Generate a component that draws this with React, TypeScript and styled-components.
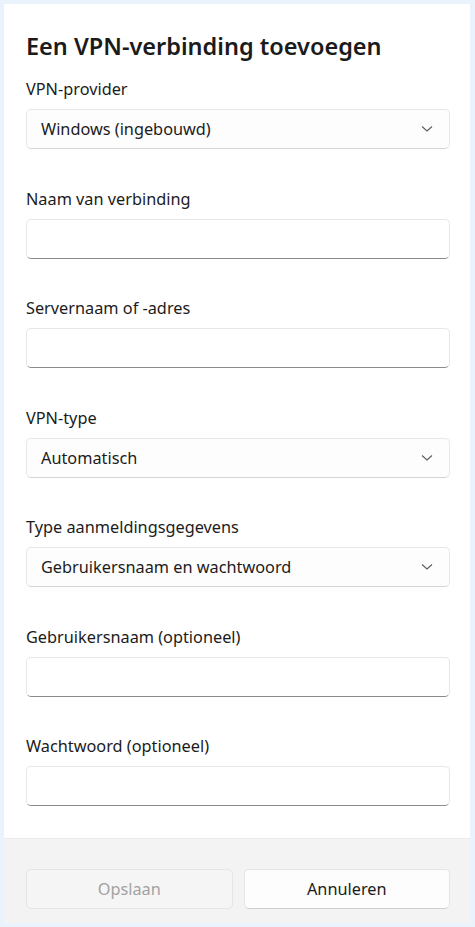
import React from "react";
import styled, { createGlobalStyle } from "styled-components";

const GlobalStyle = createGlobalStyle`
  html, body {
    margin: 0;
    padding: 0;
    background: #eaf3fb;
  }
  body {
    font-family: "Noto Sans", "Open Sans", sans-serif;
    color: #1b1b1b;
  }
`;

const Dialog = styled.div`
  margin: 4px 0 0 4px;
  width: 466px;
  background: #ffffff;
  display: flex;
  flex-direction: column;
`;

const Body = styled.div`
  padding: 26px 20px 32px 22px;
  display: flex;
  flex-direction: column;
`;

const Title = styled.h1`
  margin: 0 0 15px;
  font-size: 23.5px;
  line-height: 32px;
  font-weight: 600;
  color: #1b1b1b;
`;

const Field = styled.div`
  display: flex;
  flex-direction: column;
  margin-bottom: 37.5px;

  &:last-child {
    margin-bottom: 0;
  }
`;

const Label = styled.label`
  font-size: 16.3px;
  line-height: 24px;
  margin-bottom: 8px;
`;

const Box = styled.div<{ $input?: boolean }>`
  height: 40px;
  box-sizing: border-box;
  border: 1px solid #e7e7e7;
  border-bottom-color: ${(p) => (p.$input ? "#8a8a8a" : "#d4d4d4")};
  border-radius: 5px;
  background: ${(p) => (p.$input ? "#ffffff" : "#fdfdfd")};
  display: flex;
  align-items: center;
  justify-content: space-between;
  padding: 0 16px 0 14px;
  font-size: 16.3px;
`;

const Chevron = () => (
  <svg width="12" height="8" viewBox="0 0 12 8">
    <path d="M1 1.5 L6 6 L11 1.5" fill="none" stroke="#5c5c5c" strokeWidth="1.1" />
  </svg>
);

const Footer = styled.div`
  height: 85px;
  box-sizing: border-box;
  background: #f3f3f3;
  border-top: 1px solid #ebebeb;
  padding: 30px 20px 0 22px;
  display: grid;
  grid-template-columns: 1fr 1fr;
  column-gap: 11px;
  align-items: start;
`;

const Button = styled.button<{ $disabled?: boolean }>`
  height: 40px;
  border-radius: 5px;
  border: 1px solid #e5e5e5;
  border-bottom-color: ${(p) => (p.$disabled ? "#e5e5e5" : "#cfcfcf")};
  background: ${(p) => (p.$disabled ? "#f5f5f5" : "#fdfdfd")};
  color: ${(p) => (p.$disabled ? "#a2a2a2" : "#1b1b1b")};
  font-family: inherit;
  font-size: 16.3px;
`;

const fields: { label: string; value?: string; select?: boolean }[] = [
  { label: "VPN-provider", value: "Windows (ingebouwd)", select: true },
  { label: "Naam van verbinding" },
  { label: "Servernaam of -adres" },
  { label: "VPN-type", value: "Automatisch", select: true },
  { label: "Type aanmeldingsgegevens", value: "Gebruikersnaam en wachtwoord", select: true },
  { label: "Gebruikersnaam (optioneel)" },
  { label: "Wachtwoord (optioneel)" },
];

export default function App() {
  return (
    <>
      <GlobalStyle />
      <Dialog>
        <Body>
          <Title>Een VPN-verbinding toevoegen</Title>
          {fields.map((f) => (
            <Field key={f.label}>
              <Label>{f.label}</Label>
              <Box $input={!f.select}>
                <span>{f.value}</span>
                {f.select && <Chevron />}
              </Box>
            </Field>
          ))}
        </Body>
        <Footer>
          <Button $disabled>Opslaan</Button>
          <Button>Annuleren</Button>
        </Footer>
      </Dialog>
    </>
  );
}
